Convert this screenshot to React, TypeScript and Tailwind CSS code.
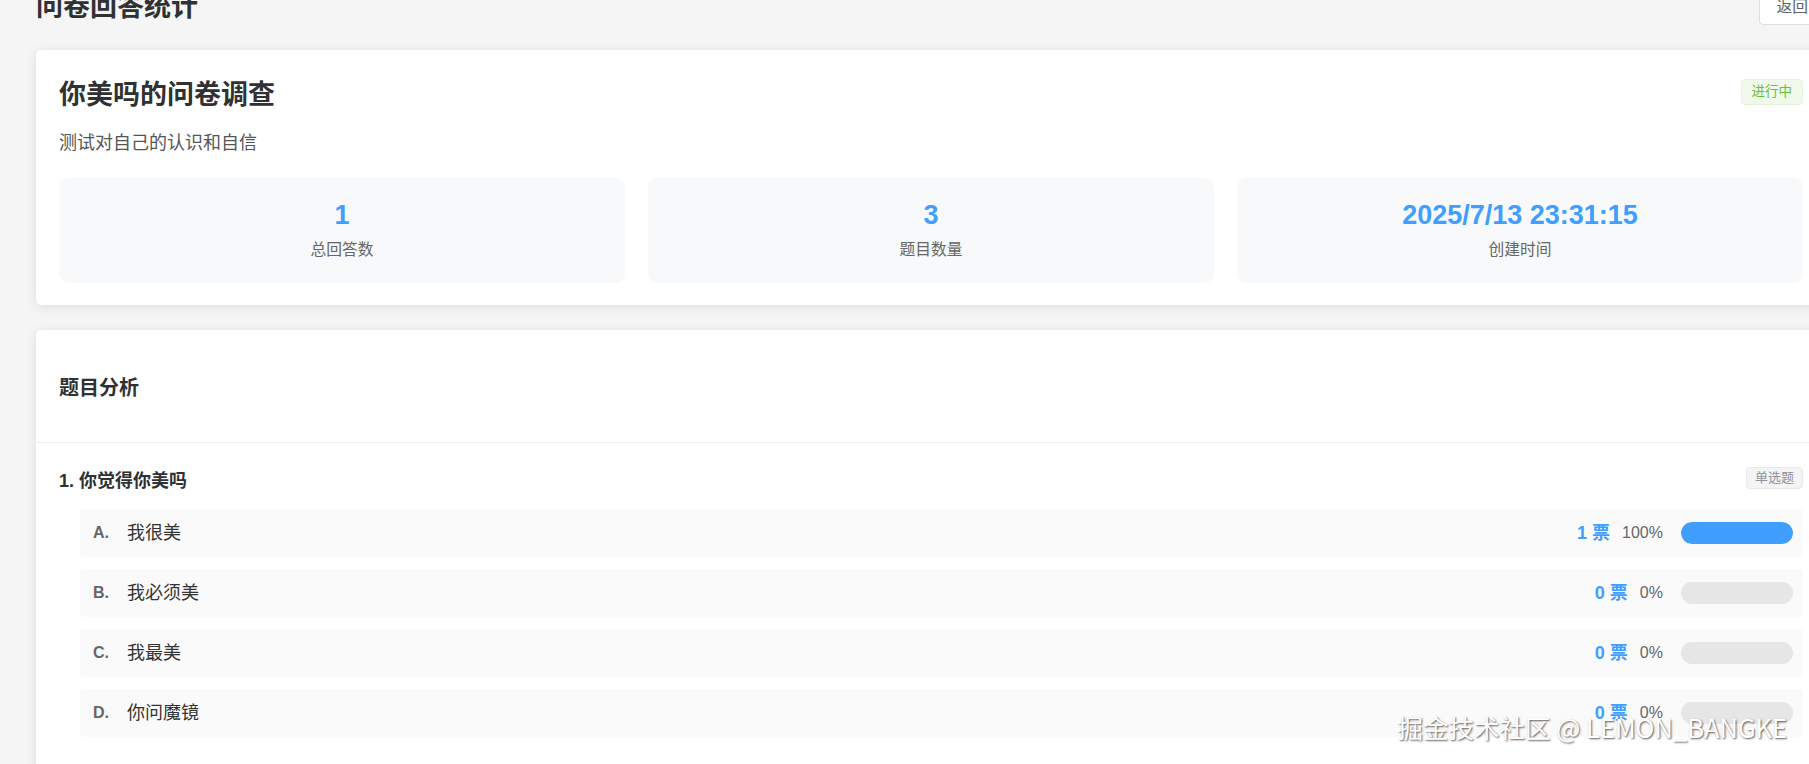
import React from "react";

type Option = {
  label: string;
  text: string;
  votes: number;
};

type Question = {
  id: number;
  title: string;
  type: string;
  options: Option[];
};

const survey = {
  title: "你美吗的问卷调查",
  description: "测试对自己的认识和自信",
  status: "进行中",
  totalAnswers: 1,
  questionCount: 3,
  createdAt: "2025/7/13 23:31:15",
};

const questions: Question[] = [
  {
    id: 1,
    title: "你觉得你美吗",
    type: "单选题",
    options: [
      { label: "A", text: "我很美", votes: 1 },
      { label: "B", text: "我必须美", votes: 0 },
      { label: "C", text: "我最美", votes: 0 },
      { label: "D", text: "你问魔镜", votes: 0 },
    ],
  },
];

const fontStack =
  "font-['Liberation_Sans','Noto_Sans_CJK_SC',sans-serif]";

function StatBox({ value, label }: { value: React.ReactNode; label: string }) {
  return (
    <div className="rounded-[9px] bg-[#f8f9fa] pt-[21px] pb-[22px] text-center">
      <div className="text-[27px] leading-[32px] font-bold text-[#409eff]">{value}</div>
      <div className="mt-[8px] text-[15.75px] leading-[22px] text-[#666666]">{label}</div>
    </div>
  );
}

function OptionRow({ option, total }: { option: Option; total: number }) {
  const pct = total > 0 ? Math.round((option.votes / total) * 100) : 0;
  return (
    <div className="flex h-[48px] items-center rounded-[4px] bg-[#fafafa] pr-[10px] pl-[13px]">
      <span className="w-[34px] text-[16px] font-bold text-[#666666]">{option.label}.</span>
      <span className="flex-1 text-[18px] text-[#333333]">{option.text}</span>
      <span className="text-[18px] font-bold text-[#409eff]">{option.votes} 票</span>
      <span className="ml-[12px] text-[16px] text-[#666666]">{pct}%</span>
      <div className="ml-[18px] h-[22px] w-[112px] overflow-hidden rounded-full bg-[#e6e6e6]">
        <div className="h-full rounded-full bg-[#409eff]" style={{ width: `${pct}%` }} />
      </div>
    </div>
  );
}

function QuestionBlock({ q, index }: { q: Question; index: number }) {
  const total = q.options.reduce((sum, o) => sum + o.votes, 0);
  return (
    <div>
      <div className="flex items-start justify-between">
        <h4 className="mt-[3px] text-[18px] leading-[27px] font-bold text-[#303133]">
          {index + 1}. {q.title}
        </h4>
        <span className="mt-[2px] flex h-[22px] items-center rounded-[4px] border border-[#e9e9eb] bg-[#f4f4f5] px-[8px] text-[13px] text-[#909399]">
          {q.type}
        </span>
      </div>
      <div className="mt-[14px] ml-[21px] flex flex-col gap-[12px]">
        {q.options.map((o) => (
          <OptionRow key={o.label} option={o} total={total} />
        ))}
      </div>
    </div>
  );
}

export default function App() {
  return (
    <div className={`relative h-[764px] w-full overflow-hidden bg-[#f5f5f5] ${fontStack}`}>
      <div className="ml-[36px] w-[1790px]">
        {/* page header */}
        <div className="-mt-[13px] mb-[23px] flex h-[40px] items-center justify-between">
          <h1 className="text-[27px] font-bold text-[#303133]">问卷回答统计</h1>
          <button className="h-[36px] rounded-[4px] border border-[#dcdfe6] bg-white px-[17px] text-[15.75px] text-[#606266]">
            返回
          </button>
        </div>

        {/* survey overview */}
        <div className="rounded-[5px] bg-white px-[23px] pt-[28px] pb-[22px] shadow-[0_2px_12px_0_rgba(0,0,0,0.1)]">
          <div className="flex items-start justify-between">
            <h2 className="text-[27px] leading-[35px] font-bold text-[#303133]">{survey.title}</h2>
            <span className="mt-[1px] flex h-[26px] items-center rounded-[4px] border border-[#e1f3d8] bg-[#f0f9eb] px-[10px] text-[13.5px] text-[#67c23a]">
              {survey.status}
            </span>
          </div>
          <p className="mt-[17px] text-[18px] leading-[27px] text-[#555555]">{survey.description}</p>
          <div className="mt-[21px] grid grid-cols-3 gap-[23px]">
            <StatBox value={survey.totalAnswers} label="总回答数" />
            <StatBox value={survey.questionCount} label="题目数量" />
            <StatBox value={survey.createdAt} label="创建时间" />
          </div>
        </div>

        {/* per-question analysis */}
        <div className="mt-[25px] rounded-[5px] bg-white shadow-[0_2px_12px_0_rgba(0,0,0,0.1)]">
          <div className="flex h-[113px] items-center border-b border-[#ebeef5] px-[23px] pt-[4px]">
            <h3 className="text-[20px] font-bold text-[#303133]">题目分析</h3>
          </div>
          <div className="px-[23px] pt-[22px] pb-[60px]">
            {questions.map((q, i) => (
              <QuestionBlock key={q.id} q={q} index={i} />
            ))}
          </div>
        </div>
      </div>

      <div className="absolute right-[22px] bottom-[18px] font-['Noto_Sans_CJK_SC','Noto_Sans',sans-serif] text-[25.5px] text-white [text-shadow:1px_1px_2px_rgba(0,0,0,0.65)]">
        掘金技术社区 @ LEMON_BANGKE
      </div>
    </div>
  );
}
